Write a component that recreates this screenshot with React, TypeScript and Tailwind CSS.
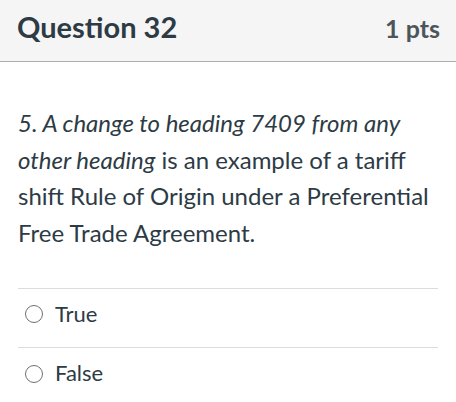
export default function App() {
  return (
    <div className="w-[456px] h-[402px] bg-white text-[#2d3b45]" style={{ fontFamily: "Lato, 'Noto Sans', sans-serif" }}>
      <div className="h-[62px] bg-[#f5f5f5] border-b border-[#a8b0b5] flex items-baseline justify-between pl-[17px] pr-[16px] pt-[12px]">
        <h2 className="text-[29px] font-bold leading-none text-[#2d3b45]">Question 32</h2>
        <div className="text-[25px] font-bold leading-none text-[#4d555b]">1 pts</div>
      </div>
      <div className="px-[18px] pt-[43px]">
        <p className="text-[24px] leading-[36.5px]">
          <em>5. A change to heading 7409 from any other heading</em> is an example of a tariff shift Rule of Origin under a Preferential Free Trade Agreement.
        </p>
        <div className="mt-[37px] border-t border-[#dcdcdc]">
          <div className="h-[59px] flex items-center pb-[10px] border-b border-[#dcdcdc]">
            <span className="ml-[7px] w-[18px] h-[18px] mt-[2px] rounded-full border-[1.5px] border-[#707070]" />
            <span className="ml-[12px] text-[22px]">True</span>
          </div>
          <div className="h-[59px] flex items-center pb-[10px]">
            <span className="ml-[7px] w-[18px] h-[18px] mt-[2px] rounded-full border-[1.5px] border-[#707070]" />
            <span className="ml-[12px] text-[22px]">False</span>
          </div>
        </div>
      </div>
    </div>
  );
}
